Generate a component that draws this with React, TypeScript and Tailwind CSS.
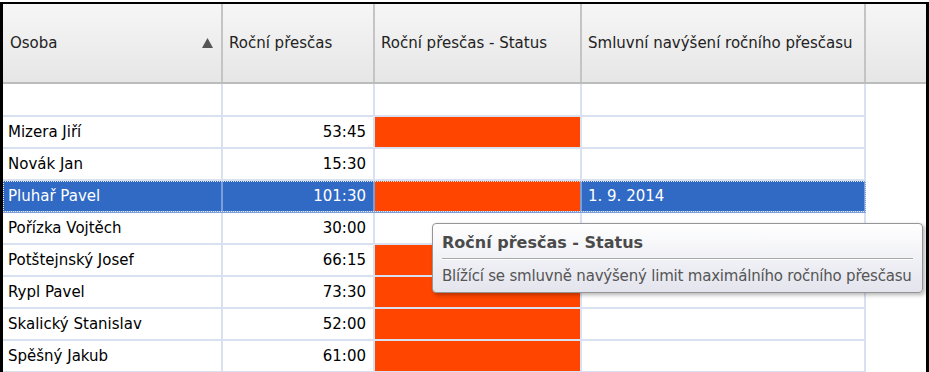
const rows = [
  { name: "Mizera Jiří", hours: "53:45", over: true, date: "" },
  { name: "Novák Jan", hours: "15:30", over: false, date: "" },
  { name: "Pluhař Pavel", hours: "101:30", over: true, date: "1. 9. 2014", selected: true },
  { name: "Pořízka Vojtěch", hours: "30:00", over: false, date: "" },
  { name: "Potštejnský Josef", hours: "66:15", over: true, date: "" },
  { name: "Rypl Pavel", hours: "73:30", over: true, date: "" },
  { name: "Skalický Stanislav", hours: "52:00", over: true, date: "" },
  { name: "Spěšný Jakub", hours: "61:00", over: true, date: "" },
];

function SortArrow() {
  return (
    <svg width="11" height="10" viewBox="0 0 11 10" className="shrink-0">
      <polygon points="5.5,0 11,10 0,10" fill="#555555" />
    </svg>
  );
}

export default function App() {
  return (
    <div className="relative w-[929px] h-[372px] overflow-hidden bg-white font-['DejaVu_Sans',sans-serif] text-[15px] text-black">
      <div className="mt-[2px] h-[370px] border-t-2 border-l-[3px] border-r-[3px] border-black flex flex-col">
        {/* header */}
        <div className="flex h-[80px] shrink-0 border-b-2 border-[#bcbcbc] bg-linear-to-b from-[#f6f6f6] to-[#e6e6e6] text-[#222]">
          <div className="w-[220px] flex items-center justify-between pl-[7px] pr-[8px] border-r-2 border-[#c4c4c4]">
            <span>Osoba</span>
            <SortArrow />
          </div>
          <div className="w-[152px] flex items-center pl-[6px] border-r-2 border-[#c4c4c4]">Roční přesčas</div>
          <div className="w-[207px] flex items-center pl-[6px] border-r-2 border-[#c4c4c4]">Roční přesčas - Status</div>
          <div className="w-[284px] flex items-center pl-[6px] border-r-2 border-[#c4c4c4]">Smluvní navýšení ročního přesčasu</div>
          <div className="flex-1" />
        </div>

        {/* filter row */}
        <div className="flex h-[33px] shrink-0">
          <div className="w-[220px] border-r-2 border-b-2 border-[#d9e1f1]" />
          <div className="w-[152px] border-r-2 border-b-2 border-[#d9e1f1]" />
          <div className="w-[207px] border-r-2 border-b-2 border-[#d9e1f1]" />
          <div className="w-[284px] border-r-2 border-b-2 border-[#d9e1f1]" />
          <div className="flex-1" />
        </div>

        {/* data */}
        {rows.map((r) => {
          const sel = r.selected;
          const line = sel ? "border-[#7d9dd6]" : "border-[#d9e1f1]";
          return (
            <div key={r.name} className="flex h-[32px] shrink-0">
              <div className={`relative flex ${sel ? "bg-[#316ac5] text-white" : ""}`}>
                <div className={`w-[220px] flex items-center pl-[5px] border-r-2 border-b-2 ${line}`}>{r.name}</div>
                <div className={`w-[152px] flex items-center justify-end pr-[7px] border-r-2 border-b-2 ${line}`}>{r.hours}</div>
                <div className={`w-[207px] border-r-2 border-b-2 ${line}`}>
                  {r.over && <div className="h-full bg-[#ff4500]" />}
                </div>
                <div className={`w-[284px] flex items-center pl-[6px] border-r-2 border-b-2 ${line}`}>{r.date}</div>
                {sel && (
                  <div className="absolute inset-x-0 top-0 bottom-[1px] border border-dotted border-[#dfe8f8] pointer-events-none" />
                )}
              </div>
              <div className="flex-1" />
            </div>
          );
        })}
      </div>

      {/* tooltip */}
      <div className="absolute left-[432px] top-[223px] w-[491px] h-[70px] rounded-[4px] border border-[#959595] bg-linear-to-b from-white to-[#e3e4ed] shadow-[2px_2px_4px_rgba(0,0,0,0.3)] flex flex-col">
        <div className="pl-[9px] pt-[8px] h-[34px] text-[16px] font-bold text-[#4a4a4a] leading-[22px]">Roční přesčas - Status</div>
        <div className="mx-[9px] border-t border-[#a8a8a8] border-b border-b-white" />
        <div className="pl-[9px] pt-[6px] text-[15px] tracking-[-0.2px] text-[#555] leading-[20px]">
          Blížící se smluvně navýšený limit maximálního ročního přesčasu
        </div>
      </div>
    </div>
  );
}
